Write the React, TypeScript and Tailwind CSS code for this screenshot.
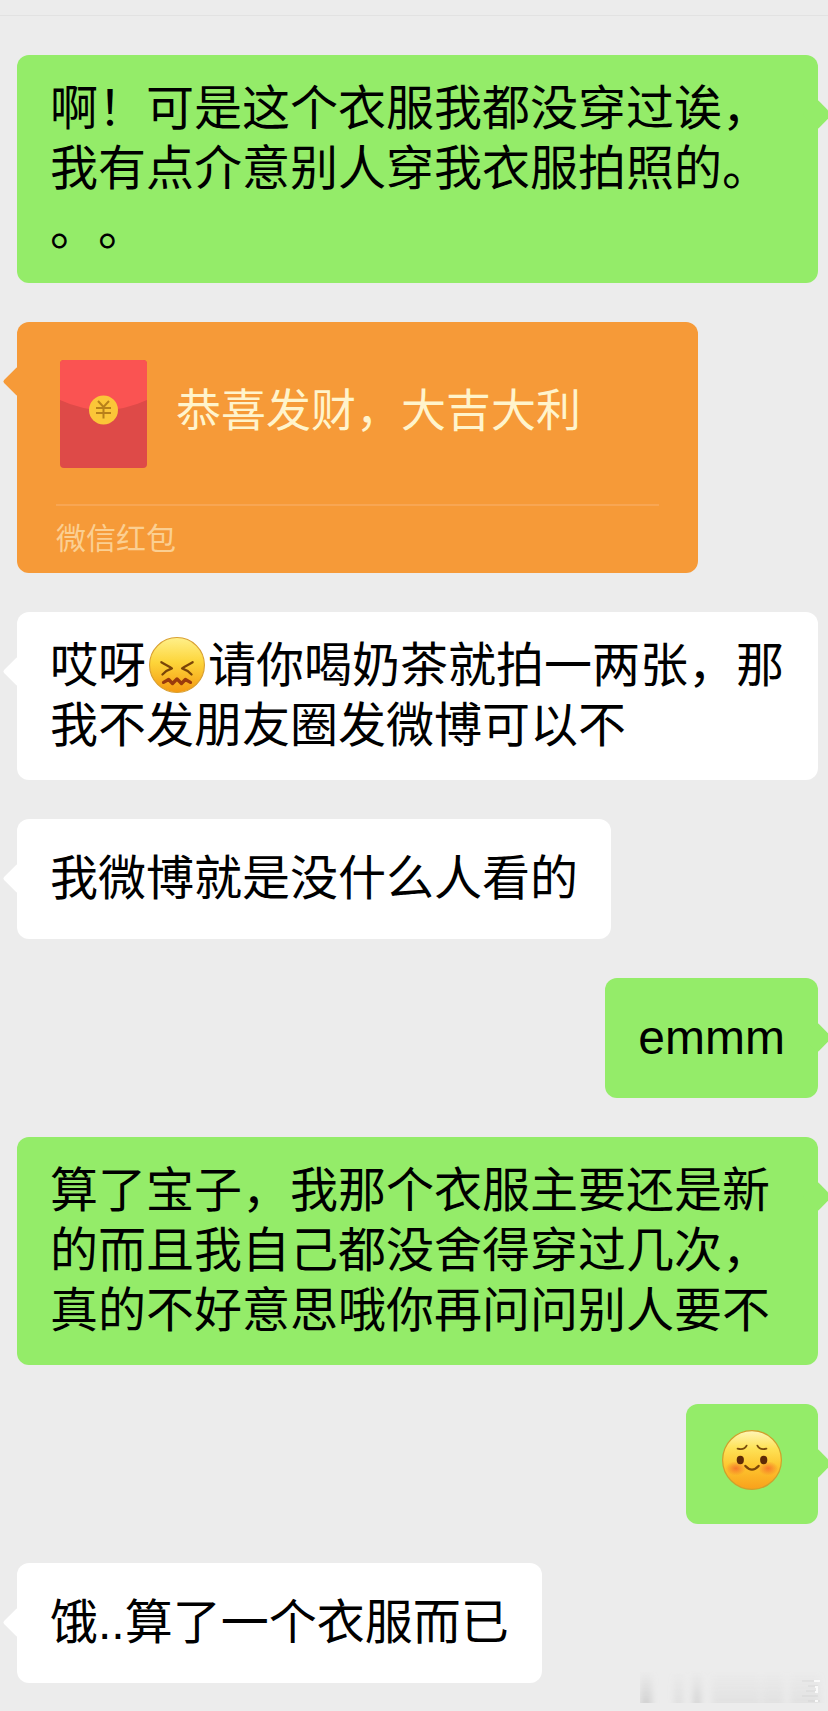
import type { ReactNode } from "react";

type BubbleProps = {
    side: "left" | "right";
    single?: boolean;
    children: ReactNode;
};

function Tail({ side, color }: { side: "left" | "right"; color: string }) {
    return (
        <span
            aria-hidden="true"
            className={`absolute top-[49px] size-[21px] rotate-45 rounded-[2px] ${color} ${side === "left" ? "-left-[10px]" : "-right-[10px]"}`}
        />
    );
}

function Bubble({ side, single, children }: BubbleProps) {
    const color = side === "left" ? "bg-white" : "bg-[#94ec69]";
    return (
        <li className={`flex ${side === "left" ? "justify-start" : "justify-end"}`}>
            <div className={`relative rounded-xl pl-[33px] ${single ? "py-[30px] pr-[33px]" : "w-full py-6 pr-6"} ${color}`}>
                <Tail side={side} color={color} />
                <p className="relative text-[48px] leading-[60px] text-black">{children}</p>
            </div>
        </li>
    );
}

function Confounded() {
    return (
        <svg role="img" aria-label="困惑" viewBox="0 0 100 100" className="mx-[3px] -mt-4 inline size-[56px] align-[-11px]">
            <defs>
                <linearGradient id="faceA" x1="0" y1="0" x2="0" y2="1">
                    <stop offset="0" stopColor="#fff08a" />
                    <stop offset="0.45" stopColor="#fdd53a" />
                    <stop offset="1" stopColor="#f59a12" />
                </linearGradient>
            </defs>
            <circle cx="50" cy="50" r="49" fill="url(#faceA)" stroke="#d9a032" strokeWidth="2" />
            <path d="M22 45C28 49 35 52 41 56C34 58 29 62 24 67" fill="none" stroke="#7a4508" strokeWidth="4" strokeLinecap="round" strokeLinejoin="round" />
            <path d="M78 45C72 49 65 52 59 56C66 58 71 62 76 67" fill="none" stroke="#7a4508" strokeWidth="4" strokeLinecap="round" strokeLinejoin="round" />
            <path d="M26 81L35 76L42 83L50 75L58 83L65 76L74 81" fill="none" stroke="#9a3a0c" strokeWidth="6" strokeLinecap="round" strokeLinejoin="round" />
        </svg>
    );
}

function ShySmile() {
    return (
        <svg role="img" aria-label="害羞" viewBox="0 0 100 100" className="mx-[3px] -mt-4 inline size-[60px] align-[-10px]">
            <defs>
                <linearGradient id="faceB" x1="0" y1="0" x2="0" y2="1">
                    <stop offset="0" stopColor="#fff6b8" />
                    <stop offset="0.3" stopColor="#fee257" />
                    <stop offset="0.6" stopColor="#fdc62f" />
                    <stop offset="1" stopColor="#f9a01b" />
                </linearGradient>
                <radialGradient id="blush">
                    <stop offset="0" stopColor="#f4622a" stopOpacity="0.75" />
                    <stop offset="1" stopColor="#f4622a" stopOpacity="0" />
                </radialGradient>
            </defs>
            <circle cx="50" cy="50" r="49" fill="url(#faceB)" stroke="#cfa02c" strokeWidth="2" />
            <ellipse cx="23" cy="64" rx="17" ry="12" fill="url(#blush)" />
            <ellipse cx="77" cy="64" rx="17" ry="12" fill="url(#blush)" />
            <ellipse cx="30.5" cy="50" rx="6" ry="7" fill="#5e2a06" />
            <ellipse cx="69.5" cy="50" rx="6" ry="7" fill="#5e2a06" />
            <path d="M26 31Q37 34 41 26M74 31Q63 34 59 26" fill="none" stroke="#7a4c0c" strokeWidth="3" strokeLinecap="round" />
            <path d="M39 60Q50 72 61 60" fill="none" stroke="#7a4508" strokeWidth="4" strokeLinecap="round" />
        </svg>
    );
}

function Envelope() {
    return (
        <svg aria-hidden="true" viewBox="0 0 87 108" className="h-[108px] w-[87px] shrink-0">
            <rect width="87" height="108" rx="4" fill="#de4a48" />
            <path d="M4 0H83Q87 0 87 4V40Q43.5 60 0 40V4Q0 0 4 0Z" fill="#fa5352" />
            <circle cx="43.5" cy="50" r="14.5" fill="#fbc638" />
            <path d="M38 41L43.5 47L49 41M36 48H51M36 53H51M43.5 47V58.5" fill="none" stroke="#b8801a" strokeWidth="2" />
        </svg>
    );
}

function RedPacket() {
    return (
        <li className="flex justify-start">
            <div className="relative w-[681px] max-w-full rounded-xl bg-[#f69a38] px-[39px]">
                <Tail side="left" color="bg-[#f69a38]" />
                <div className="flex items-center gap-[29px] border-b-2 border-[#f8a653] pt-[38px] pb-9 pl-1">
                    <Envelope />
                    <p className="pb-1 text-[45px] leading-[60px] text-[#fff4cc]">恭喜发财，大吉大利</p>
                </div>
                <p className="pt-[3px] pb-1 text-[30px] leading-[60px] text-[#fbcf92]">微信红包</p>
            </div>
        </li>
    );
}

// faded streaks in the bottom corner
function Streaks() {
    return (
        <svg aria-hidden="true" viewBox="0 0 188 32" className="absolute right-0 bottom-2 h-8 w-[188px]">
            <defs>
                <linearGradient id="fade" x1="0" y1="0" x2="0" y2="1">
                    <stop offset="0" stopColor="#bdbdbd" stopOpacity="0" />
                    <stop offset="1" stopColor="#bdbdbd" stopOpacity="0.55" />
                </linearGradient>
                <filter id="soft" x="-10%" width="120%">
                    <feGaussianBlur stdDeviation="3 0" />
                </filter>
            </defs>
            <g fill="url(#fade)" filter="url(#soft)">
                <rect x="0" width="12" height="32" />
                <rect x="34" width="9" height="32" opacity="0.5" />
                <rect x="53" width="8" height="32" opacity="0.9" />
                <rect x="72" width="36" height="32" opacity="0.4" />
                <rect x="108" width="12" height="32" opacity="0.4" />
                <rect x="122" width="22" height="32" opacity="0.4" />
                <rect x="150" width="30" height="32" opacity="0.4" />
            </g>
            <path d="M162 10H180M168 15H178M166 20H176M162 25H178M168 30H180" stroke="#c4c4c4" strokeOpacity="0.4" />
            <path d="M174 10H180M175 16H177V21H175M175 30H178" fill="none" stroke="#fafafa" strokeWidth="2" />
        </svg>
    );
}

export default function App() {
    return (
        <main lang="zh-CN" className="relative min-h-screen overflow-hidden bg-[#ececec] pb-7 font-['Liberation_Sans','Noto_Sans_CJK_SC',sans-serif] [text-spacing-trim:space-all]">
            <div className="h-4 border-b border-[#e2e2e2]" />
            <ul className="flex flex-col gap-[39px] pt-[39px] pr-[10px] pl-[17px]">
                <Bubble side="right">
                    啊！可是这个衣服我都没穿过诶，
                    <br />
                    我有点介意别人穿我衣服拍照的。
                    <br />
                    。。
                </Bubble>
                <RedPacket />
                <Bubble side="left">
                    哎呀
                    <Confounded />
                    请你喝奶茶就拍一两张，那
                    <br />
                    我不发朋友圈发微博可以不
                </Bubble>
                <Bubble side="left" single>我微博就是没什么人看的</Bubble>
                <Bubble side="right" single>emmm</Bubble>
                <Bubble side="right">
                    算了宝子，我那个衣服主要还是新
                    <br />
                    的而且我自己都没舍得穿过几次，
                    <br />
                    真的不好意思哦你再问问别人要不
                </Bubble>
                <Bubble side="right" single>
                    <ShySmile />
                </Bubble>
                <Bubble side="left" single>饿..算了一个衣服而已</Bubble>
            </ul>
            <Streaks />
        </main>
    );
}
